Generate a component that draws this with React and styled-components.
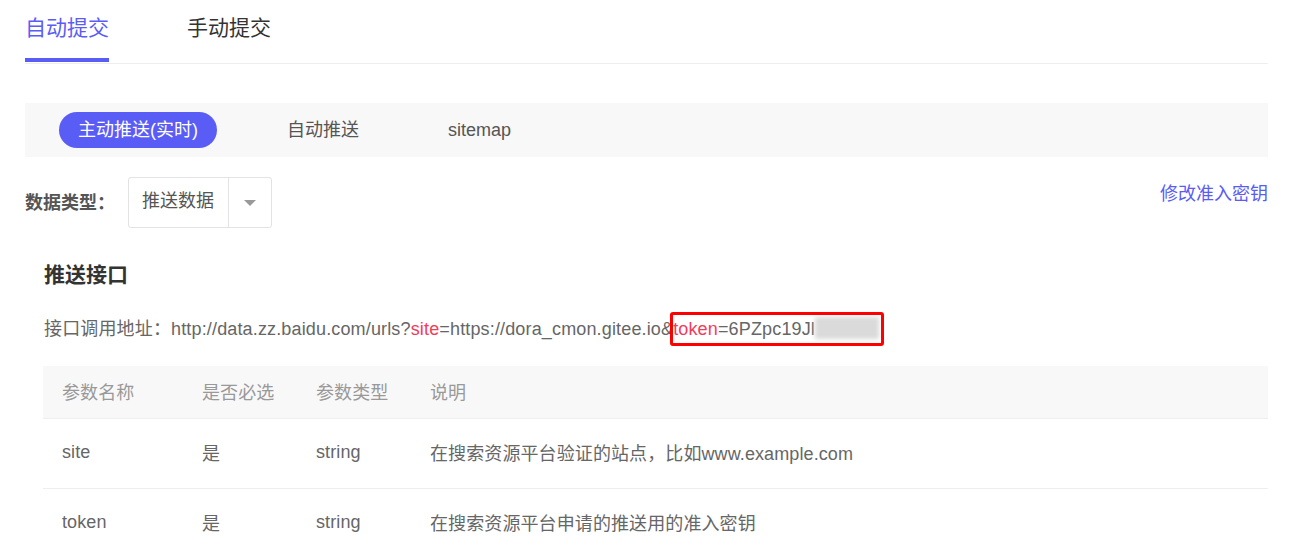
import React from "react"
import styled, { createGlobalStyle } from "styled-components"

const GlobalStyle = createGlobalStyle`
  body {
    margin: 0;
    background: #fff;
    font-family: "Liberation Sans", "Noto Sans CJK SC", sans-serif;
    color: #666;
  }
`

const Page = styled.div`
  padding: 0 30px 0 25px;
`

// top tabs
const TabBar = styled.div`
  display: flex;
  gap: 78px;
  height: 63px;
  border-bottom: 1px solid #eee;
`
const Tab = styled.div`
  box-sizing: border-box;
  height: 62px;
  padding-top: 14px;
  line-height: 28px;
  font-size: 21px;
  color: ${props => (props.active ? "#5a5cf6" : "#333")};
  border-bottom: 4px solid ${props => (props.active ? "#5a5cf6" : "transparent")};
  cursor: pointer;
`

// sub tabs
const SubBar = styled.div`
  margin-top: 39px;
  height: 54px;
  background: #f8f8f8;
  display: flex;
  align-items: center;
  padding-left: 34px;
  gap: 51px;
`
const SubTab = styled.div`
  height: 36px;
  line-height: 36px;
  padding: 0 19px;
  border-radius: 18px;
  font-size: 18px;
  color: ${props => (props.active ? "#fff" : "#555")};
  background: ${props => (props.active ? "#5a5cf6" : "transparent")};
  cursor: pointer;
`

// data type row
const FilterRow = styled.div`
  margin-top: 20px;
  display: flex;
  align-items: center;
`
const Label = styled.div`
  font-size: 18px;
  font-weight: bold;
  color: #555;
  margin: -4px 13px 0 0;
`
const Select = styled.div`
  display: flex;
  height: 51px;
  box-sizing: border-box;
  border: 1px solid #e3e3e3;
  border-radius: 3px;
`
const SelectValue = styled.div`
  padding: 0 14px 2px 13px;
  line-height: 47px;
  font-size: 18px;
  color: #555;
  border-right: 1px solid #e3e3e3;
`
const SelectArrow = styled.div`
  width: 42px;
  display: flex;
  align-items: center;
  justify-content: center;
  &::after {
    content: "";
    border-left: 6px solid transparent;
    border-right: 6px solid transparent;
    border-top: 6px solid #999;
  }
`
const LinkBtn = styled.a`
  margin-left: auto;
  align-self: flex-start;
  line-height: 34px;
  font-size: 18px;
  color: #5a5cf6;
  cursor: pointer;
`

// api section
const Section = styled.div`
  margin-left: 18px;
`
const Heading = styled.h3`
  margin: 32px 0 0 1px;
  line-height: 30px;
  font-size: 21px;
  font-weight: bold;
  color: #333;
`
const UrlLine = styled.div`
  margin: 24px 0 0 1px;
  line-height: 30px;
  font-size: 18px;
  color: #666;
  letter-spacing: 0.15px;
  white-space: nowrap;
`
const Key = styled.span`
  color: #f33b5b;
`
const Marked = styled.span`
  position: relative;
  &::after {
    content: "";
    position: absolute;
    left: -3px;
    right: -5px;
    top: -7px;
    bottom: -7px;
    border: 3px solid #f00;
    border-radius: 3px;
  }
`
const Blurred = styled.span`
  display: inline-block;
  width: 64px;
  height: 22px;
  vertical-align: -4px;
  background: #dadada;
  filter: blur(2px);
`

const Table = styled.div`
  margin-top: 22px;
  font-size: 18px;
`
const Row = styled.div`
  display: grid;
  grid-template-columns: 140px 114px 114px 1fr;
  box-sizing: border-box;
  height: ${props => (props.head ? "53px" : "70px")};
  padding-bottom: 3px;
  align-items: center;
  background: ${props => (props.head ? "#f8f8f8" : "#fff")};
  color: ${props => (props.head ? "#999" : "#666")};
  border-bottom: 1px solid #eee;
`
const Cell = styled.div`
  padding-left: 19px;
  letter-spacing: 0.1px;
`

const params = [
  ["site", "是", "string", "在搜索资源平台验证的站点，比如www.example.com"],
  ["token", "是", "string", "在搜索资源平台申请的推送用的准入密钥"],
]

export default function App() {
  return (
    <>
      <GlobalStyle />
      <Page>
        <TabBar>
          <Tab active>自动提交</Tab>
          <Tab>手动提交</Tab>
        </TabBar>

        <SubBar>
          <SubTab active>主动推送(实时)</SubTab>
          <SubTab>自动推送</SubTab>
          <SubTab>sitemap</SubTab>
        </SubBar>

        <FilterRow>
          <Label>数据类型：</Label>
          <Select>
            <SelectValue>推送数据</SelectValue>
            <SelectArrow />
          </Select>
          <LinkBtn>修改准入密钥</LinkBtn>
        </FilterRow>

        <Section>
          <Heading>推送接口</Heading>
          <UrlLine>
            接口调用地址：http://data.zz.baidu.com/urls?<Key>site</Key>=https://dora_cmon.gitee.io&amp;
            <Marked>
              <Key>token</Key>=6PZpc19Jl<Blurred />
            </Marked>
          </UrlLine>

          <Table>
            <Row head>
              <Cell>参数名称</Cell>
              <Cell>是否必选</Cell>
              <Cell>参数类型</Cell>
              <Cell>说明</Cell>
            </Row>
            {params.map(p => (
              <Row key={p[0]}>
                {p.map((v, i) => (
                  <Cell key={i}>{v}</Cell>
                ))}
              </Row>
            ))}
          </Table>
        </Section>
      </Page>
    </>
  )
}
